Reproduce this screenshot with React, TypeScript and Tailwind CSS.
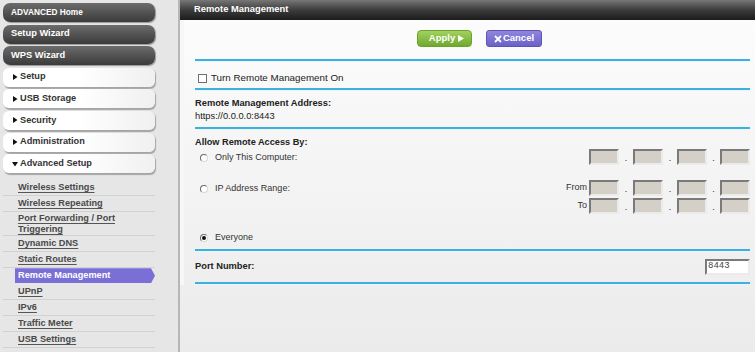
import React from "react";

const darkItems = ["ADVANCED Home", "Setup Wizard", "WPS Wizard"];
const lightItems = ["Setup", "USB Storage", "Security", "Administration"];
const subItems = [
  "Wireless Settings",
  "Wireless Repeating",
  "Port Forwarding / Port Triggering",
  "Dynamic DNS",
  "Static Routes",
  "Remote Management",
  "UPnP",
  "IPv6",
  "Traffic Meter",
  "USB Settings",
];

const Caret = ({ down = false }: { down?: boolean }) => (
  <svg width="6" height="6" viewBox="0 0 6 6" className="mr-[1px] shrink-0">
    {down ? <polygon points="0,1 6,1 3,5.5" fill="#111" /> : <polygon points="1,0 5.5,3 1,6" fill="#111" />}
  </svg>
);

const IpBox = () => (
  <span className="h-[16px] w-[30px] border-2 border-t-[#7a7a7a] border-l-[#7a7a7a] border-r-[#ebebeb] border-b-[#ebebeb] bg-[#d4d0c8]" />
);

const IpFields = () => (
  <div className="flex items-end">
    <IpBox />
    <span className="w-[14px] pb-[2px] text-center text-[9px] leading-[9px] text-[#222]">.</span>
    <IpBox />
    <span className="w-[14px] pb-[2px] text-center text-[9px] leading-[9px] text-[#222]">.</span>
    <IpBox />
    <span className="w-[13px] pb-[2px] text-center text-[9px] leading-[9px] text-[#222]">.</span>
    <IpBox />
  </div>
);

const Radio = ({ checked = false }: { checked?: boolean }) => (
  <span className="mr-[7px] flex h-[8px] w-[8px] items-center justify-center rounded-full border border-t-[#6b6b6b] border-l-[#6b6b6b] border-r-[#d8d8d8] border-b-[#d8d8d8] bg-white">
    {checked && <span className="h-[4px] w-[4px] rounded-full bg-[#111]" />}
  </span>
);

const BlueLine = () => <div className="h-[3px] border-t-2 border-[#3cb0de] bg-[#e9f6fb]" />;

export default function App() {
  return (
    <div className="flex h-[352px] w-[755px] overflow-hidden font-['Liberation_Sans',Arial,sans-serif]">
      <aside className="w-[178px] shrink-0 bg-[#e6e6e6] pl-[3px] pt-[3px]">
        <div className="flex w-[152px] flex-col gap-[2.6px]">
          {darkItems.map((item) => (
            <div
              key={item}
              className="flex h-[19px] items-center rounded-[7px] bg-gradient-to-b from-[#6c6c6c] to-[#3b3b3b] pl-[8px] text-[9.3px] font-bold text-white shadow-[1px_1px_1px_rgba(0,0,0,0.35)]"
            >
              <span className={item === "ADVANCED Home" ? "text-[8.3px]" : ""}>{item}</span>
            </div>
          ))}
          {lightItems.map((item) => (
            <div
              key={item}
              className="flex h-[19px] items-center gap-[1px] rounded-[6px] bg-gradient-to-r from-white via-white to-[#f0f0f0] pl-[9px] text-[9.2px] font-bold text-[#333] shadow-[1px_1.5px_1px_#a5a5a5]"
            >
              <Caret />
              {item}
            </div>
          ))}
          <div className="flex h-[19px] items-center gap-[1px] rounded-[6px] bg-gradient-to-r from-white via-white to-[#f0f0f0] pl-[9px] text-[9.2px] font-bold text-[#333] shadow-[1px_1.5px_1px_#a5a5a5]">
            <Caret down />
            Advanced Setup
          </div>
        </div>

        <ul className="mt-[7px] w-[152px]">
          {subItems.map((item) => {
            const active = item === "Remote Management";
            const tall = item.startsWith("Port Forwarding");
            return (
              <li
                key={item}
                className={`flex items-center border-b border-[#d2d2d2] text-[9.2px] font-bold ${
                  tall ? "h-[24px] pl-[15px] leading-[11px]" : "h-[16px]"
                } ${active ? "border-transparent pl-[12px]" : tall ? "" : "pl-[15px]"}`}
              >
                {active ? (
                  <span className="flex h-[15px] w-[140px] items-center bg-[#7a6fd6] pl-[3px] text-white [clip-path:polygon(0_0,136px_0,140px_50%,136px_100%,0_100%)]">
                    {item}
                  </span>
                ) : (
                  <span className="text-[#4a4a4a] underline decoration-[#555] underline-offset-[1.5px]">
                    {tall ? (
                      <>
                        Port Forwarding / Port
                        <br />
                        Triggering
                      </>
                    ) : (
                      item
                    )}
                  </span>
                )}
              </li>
            );
          })}
        </ul>
      </aside>

      <div className="w-[2px] shrink-0 bg-[#b7b7b7]" />

      <main className="flex min-w-0 flex-1 flex-col bg-gradient-to-b from-[#fdfdfd] to-[#ebebeb]">
        <header className="h-[20px] shrink-0 bg-gradient-to-b from-[#777] via-[#3c3c3c] to-[#1c1c1c] pl-[14px] pt-[3px] text-[9.4px] font-bold leading-[11px] text-white">
          Remote Management
        </header>

        <div className="flex flex-col border-l-4 border-[#f7f7f7] pl-[11px] pr-[5px]">
          <div className="mt-[10px] flex h-[17px] gap-[14px] pl-[222px]">
            <button className="flex h-[17px] w-[55px] items-center justify-center gap-[3px] rounded-[4px] border border-[#6aa22c] bg-gradient-to-b from-[#a2d25e] to-[#6fa92f] pl-[4px] text-[9.5px] font-bold text-white">
              Apply
              <svg width="6" height="7" viewBox="0 0 6 7">
                <polygon points="0,0 6,3.5 0,7" fill="#fff" />
              </svg>
            </button>
            <button className="flex h-[17px] w-[56px] items-center justify-center gap-[1px] rounded-[3px] border border-[#5c52b8] bg-gradient-to-b from-[#8f86dd] to-[#6c61c8] text-[9.5px] font-bold text-white">
              <svg width="8" height="8" viewBox="0 0 8 8">
                <path d="M1 1 L7 7 M7 1 L1 7" stroke="#fff" strokeWidth="1.8" />
              </svg>
              Cancel
            </button>
          </div>

          <div className="mt-[12px]">
            <BlueLine />
          </div>

          <div className="flex h-[26px] items-center pt-[6px] text-[9.8px] text-[#222]">
            <span className="mr-[4px] ml-[3px] h-[9px] w-[9px] border border-[#707070] bg-white" />
            Turn Remote Management On
          </div>

          <BlueLine />

          <div className="pt-[6px] pb-[4px] text-[9.3px] leading-[13px] text-[#222]">
            <div className="font-bold">Remote Management Address:</div>
            <div>https://0.0.0.0:8443</div>
          </div>

          <BlueLine />

          <div className="mt-[6px] text-[9.2px] font-bold leading-[13px] text-[#222]">Allow Remote Access By:</div>

          <div className="flex h-[16px] items-center justify-between text-[9px] text-[#333]">
            <div className="flex items-center pl-[5px] pt-[2px]">
              <Radio />
              Only This Computer:
            </div>
            <IpFields />
          </div>

          <div className="mt-[15px] flex justify-between text-[9px] text-[#333]">
            <div className="flex h-[16px] items-center pl-[5px] pt-[2px]">
              <Radio />
              IP Address Range:
            </div>
            <div className="flex flex-col gap-[2px]">
              <div className="flex items-center gap-[2px]">
                <span>From</span>
                <IpFields />
              </div>
              <div className="flex items-center justify-end gap-[2px]">
                <span>To</span>
                <IpFields />
              </div>
            </div>
          </div>

          <div className="mt-[17px] mb-[5px] flex h-[13px] items-center pl-[5px] text-[9px] text-[#333]">
            <Radio checked />
            Everyone
          </div>

          <BlueLine />

          <div className="flex items-center justify-between py-[7px]">
            <span className="text-[9.3px] font-bold text-[#222]">Port Number:</span>
            <span className="flex h-[16px] w-[45px] items-center border-2 border-t-[#7a7a7a] border-l-[#7a7a7a] border-r-[#ebebeb] border-b-[#ebebeb] bg-white pl-[1px] font-['Liberation_Mono',monospace] text-[9px] text-[#444]">
              8443
            </span>
          </div>

          <BlueLine />
        </div>
      </main>
    </div>
  );
}
